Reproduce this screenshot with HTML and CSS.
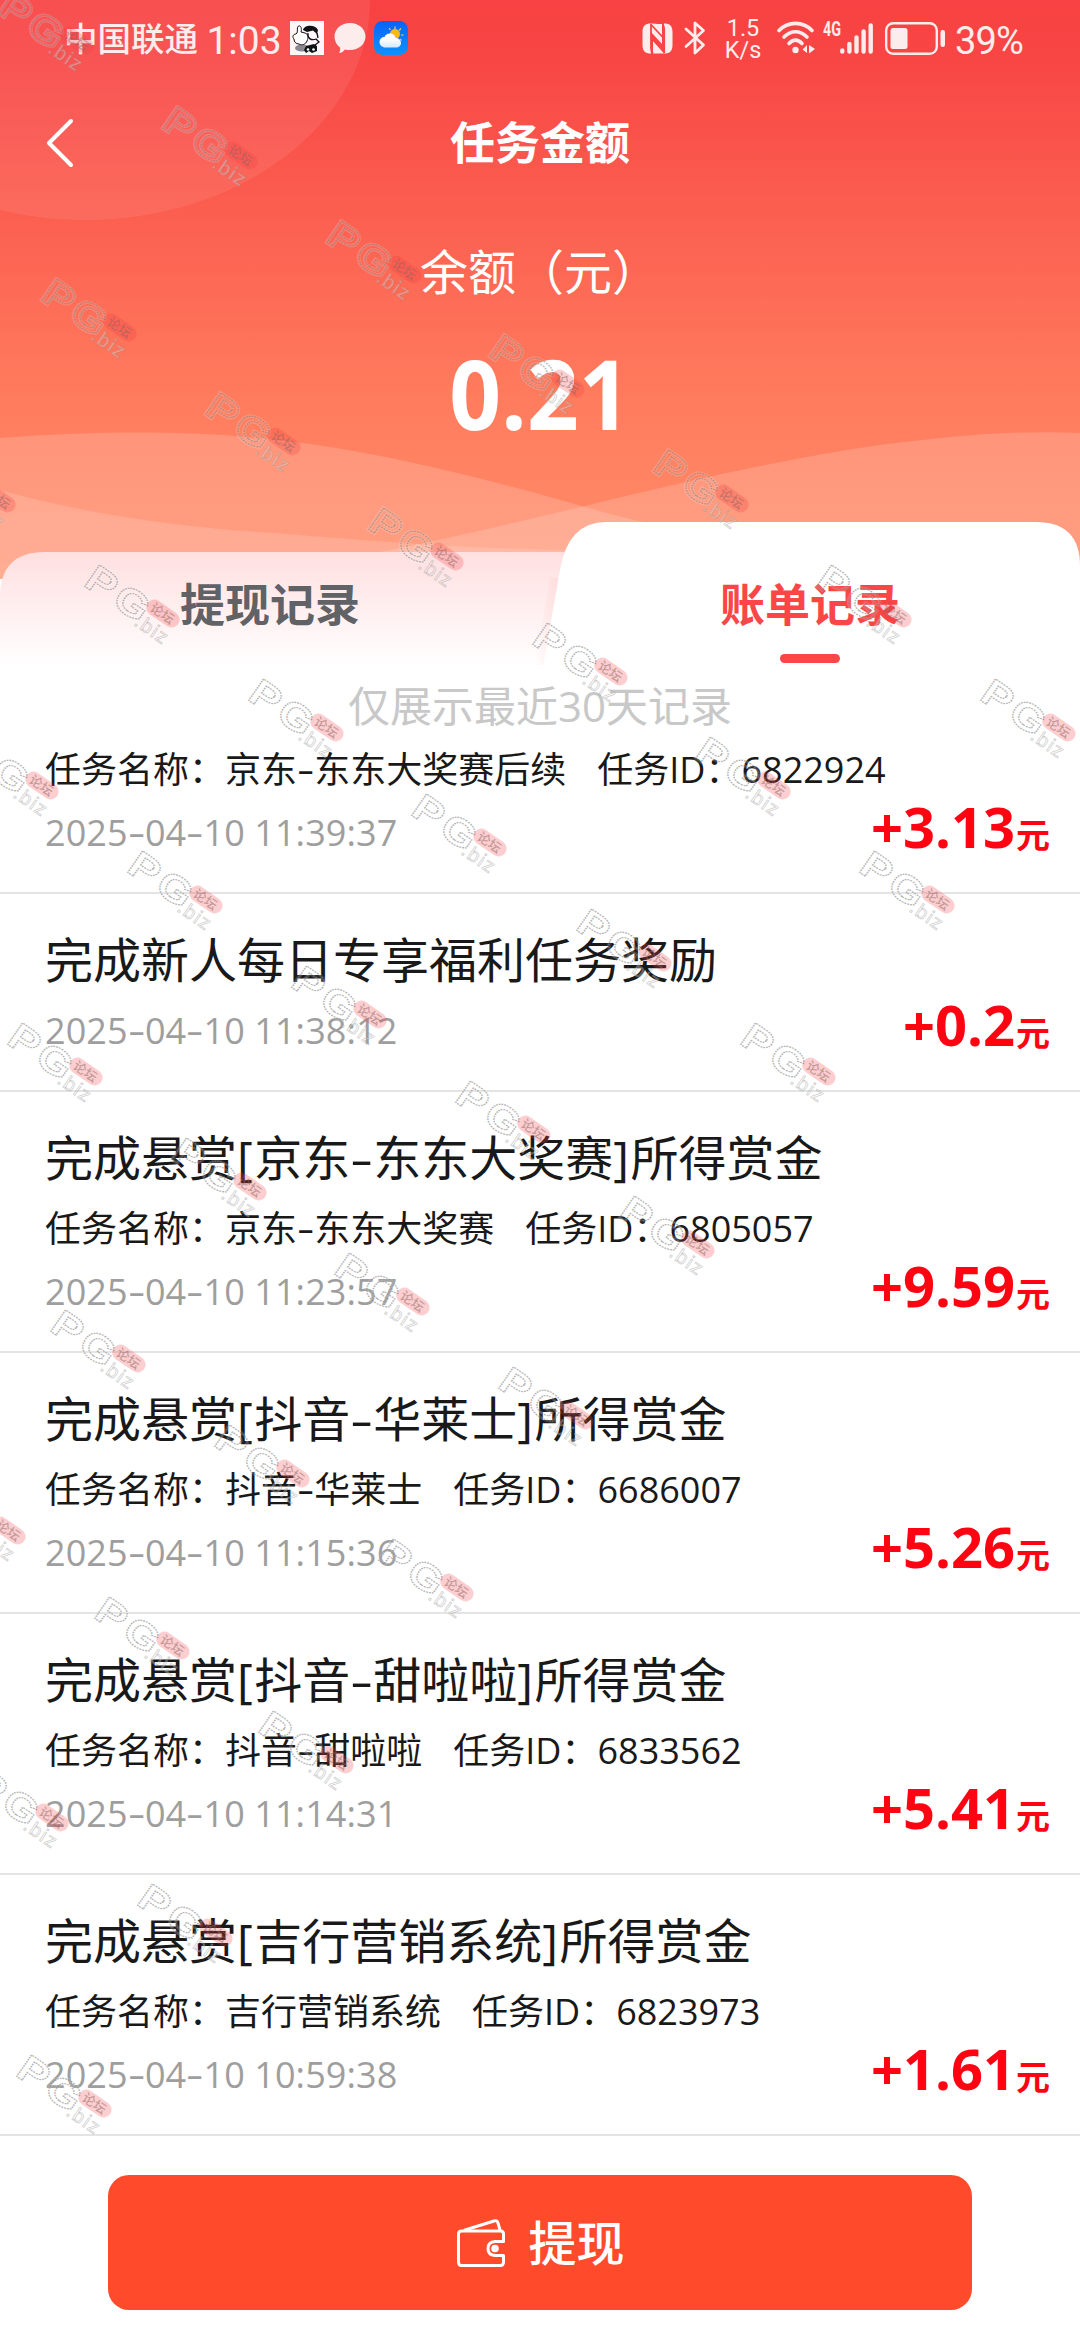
FILE: index.html
```html
<!DOCTYPE html>
<html lang="zh-CN">
<head>
<meta charset="utf-8">
<title>任务金额</title>
<link rel="stylesheet" href="styles.css">
</head>
<body>
<div class="page">
  <header class="hero">
    <svg class="hero-art" viewBox="0 0 1080 579" aria-hidden="true">
      <ellipse cx="85" cy="0" rx="285" ry="220" fill="#fff" fill-opacity=".08"/>
      <path d="M0 438C110 430 210 430 310 444C400 457 490 480 585 507C660 528 740 545 830 550V579H0Z" fill="#fff" fill-opacity=".17"/>
      <path d="M0 490C80 513 180 528 275 533C370 541 470 549 600 551V579H0Z" fill="#fff" fill-opacity=".15"/>
      <path d="M1080 433C1020 430 960 435 880 445C790 458 690 480 585 506C530 519 480 531 430 542L375 553V579H1080Z" fill="#fff" fill-opacity=".17"/>
    </svg>
    <div class="status">
      <div class="status-side">
        <span class="carrier">中国联通</span>
        <span class="clock">1:03</span>
        <svg class="ic-avatar" viewBox="0 0 34 34">
          <rect width="34" height="34" fill="#fdf6fb"/>
          <ellipse cx="12" cy="27" rx="7" ry="3.6" fill="#8d8890"/>
          <path d="M13 9C14 4 25 3 28 9L27 13L23 9.500L17 11Z" fill="#111"/>
          <path d="M6 13C3 13 2 16 4 18C4 21 6 23 9 23C12 25 16 23 17 20C19 16 18 13 15 12L11 11C12 8 11 4 8.500 5C6.500 6 8 10 7 12Z" fill="#fff" stroke="#111" stroke-width="1"/>
          <path d="M18 12C17 17 21 20 26 18L29 21L25 24M27 12L28 17" fill="none" stroke="#111" stroke-width="1.300"/>
          <path d="M16 25L24 23L27 25V30L22 32L19 30L16 32L14 29Z" fill="#111"/>
          <circle cx="18" cy="28.500" r="1.300" fill="#fff"/><circle cx="23.500" cy="28.500" r="1.300" fill="#fff"/>
        </svg>
        <svg class="ic-bubble" viewBox="0 0 32 32"><path d="M16 1C24.500 1 31.500 6.800 31.500 14.500S24.500 28 16 28C14 28 12.500 28 11 27.500C9 30 7.500 31 5 31C6 29.500 6.500 27.500 6 25.500C2.500 23 .5 19 .5 14.500C.5 6.800 7.500 1 16 1Z" fill="#fdecec"/></svg>
        <svg class="ic-weather" viewBox="0 0 34 34">
          <defs>
            <linearGradient id="sky" x2="0" y2="1"><stop stop-color="#0a62f8"/><stop offset="1" stop-color="#0b93fe"/></linearGradient>
            <linearGradient id="cloud" x2="0" y2="1"><stop offset=".4" stop-color="#fff"/><stop offset="1" stop-color="#d5e9ff"/></linearGradient>
          </defs>
          <rect width="34" height="34" rx="8.500" fill="url(#sky)"/>
          <circle cx="21" cy="13" r="5" fill="#fdb913"/>
          <path d="M21 8V5.500M25 9.500L27 7.500M27 14H29.500M16.500 9L15 7M26 18L27.500 19.500" stroke="#e9cf55" stroke-width="1.200"/>
          <path d="M11.500 26.500C8 26.500 5.500 24 5.500 21C5.500 18 8 16 10.500 16C11.500 13.500 14 12 16.500 12.500C19 12.500 21 14.500 21.500 17C24.500 17 27 19 27 22C27 24.500 25 26.500 22 26.500Z" fill="url(#cloud)"/>
        </svg>
      </div>
      <div class="status-side">
        <svg class="ic-nfc" viewBox="0 0 31 31">
          <path d="M9 .5C3 .5 .5 3 .5 9V22C.5 28 3 30.500 9 30.500V9L20 21V1C12 1 12 .5 9 .5Z" fill="#fdecec"/>
          <path d="M22 .5C28 .5 30.500 3 30.500 9V22C30.500 28 28 30.500 22 30.500L11 18V30.500H22V.5Z" fill="#fdecec"/>
          <path d="M9 1V25Q9 29 11 30.500M8.500 1L21.500 15M9.500 15L22 28M22.200 30V6Q22 3 20.500 1" fill="none" stroke="#f84645" stroke-width="1.800"/>
        </svg>
        <svg class="ic-bt" viewBox="0 0 22 34"><path d="M2 8L19.500 24L11 32V2L19.500 9.500L2 25.500" fill="none" stroke="#fdecec" stroke-width="2.800" stroke-linejoin="round" stroke-linecap="round"/></svg>
        <span class="speed"><span>1.5</span><span>K/s</span></span>
        <svg class="ic-wifi" viewBox="0 0 38 34">
          <g fill="none" stroke="#fdecec" stroke-width="3.600" stroke-linecap="round">
            <path d="M2 9.500C11 0 26 0 35 9.500"/><path d="M7 16C14 9 23 9 30 16"/><path d="M12 22.500C16 18 21 18 25 22.500"/>
          </g>
          <circle cx="18.500" cy="29" r="3.200" fill="#fdecec"/>
          <path d="M30 24V32L25.500 28.500ZM32 24V32.500L38 28Z" fill="#fdecec"/>
        </svg>
        <span class="net">4G</span>
        <svg class="ic-signal" viewBox="0 0 34 31"><path d="M2.300 27.500V28.500M9.400 21V28.500M16.500 14.500V28.500M23.600 8.500V28.500M30.700 2.500V28.500" stroke="#fdecec" stroke-width="4.400" stroke-linecap="round"/></svg>
        <svg class="ic-battery" viewBox="0 0 60 33">
          <rect x="1.200" y="1.200" width="50.600" height="30.600" rx="7" fill="none" stroke="#fdecec" stroke-width="2.400"/>
          <rect x="5.500" y="6" width="17" height="21" rx="2.500" fill="#fdecec"/>
          <rect x="55.500" y="8" width="4.500" height="17" rx="2.200" fill="#fdecec"/>
        </svg>
        <span class="pct">39%</span>
      </div>
    </div>
    <nav class="nav">
      <svg class="ic-back" viewBox="0 0 28 50"><path d="M25 3L3 25L25 47" fill="none" stroke="#fff" stroke-width="4" stroke-linecap="round" stroke-linejoin="round"/></svg>
      <h1 class="nav-title">任务金额</h1>
    </nav>
    <p class="label">余额（元）</p>
    <p class="balance">0.21</p>
  </header>

  <div class="tabs">
    <svg class="tabs-bg" viewBox="0 0 1080 144" aria-hidden="true">
      <defs><linearGradient id="tab" gradientUnits="userSpaceOnUse" x1="0" y1="30" x2="0" y2="144"><stop stop-color="#ffdfe0"/><stop offset="1" stop-color="#fff"/></linearGradient>
      <linearGradient id="edge" x2="1" y2="0"><stop stop-color="#ffd3d3" stop-opacity="0"/><stop offset="1" stop-color="#ffd3d3" stop-opacity=".55"/></linearGradient></defs>
      <path d="M0 57H60V144H0Z" fill="#fff"/>
      <path d="M0 75Q0 30 45 30H620V144H0Z" fill="url(#tab)"/>
      <path d="M535 144L550 56H562L546 144Z" fill="url(#edge)"/>
      <path d="M543 144L560 48Q568 0 606 0H1036Q1080 0 1080 44V144Z" fill="#fff"/>
    </svg>
    <button class="tab">提现记录</button>
    <button class="tab tab-on">账单记录</button>
  </div>
  <p class="notice">仅展示最近30天记录</p>

  <ul class="list">
    <li class="item item-cut">
      <p class="task">任务名称：京东<i>-</i>东东大奖赛后续<b></b>任务ID：6822924</p>
      <p class="time">2025<i>-</i>04<i>-</i>10 11:39:37</p>
      <p class="sum">+3.13<span>元</span></p>
    </li>
    <li class="item">
      <h2 class="title">完成新人每日专享福利任务奖励</h2>
      <p class="time">2025<i>-</i>04<i>-</i>10 11:38:12</p>
      <p class="sum">+0.2<span>元</span></p>
    </li>
    <li class="item">
      <h2 class="title">完成悬赏<u>[</u>京东<i>-</i>东东大奖赛<u>]</u>所得赏金</h2>
      <p class="task">任务名称：京东<i>-</i>东东大奖赛<b></b>任务ID：6805057</p>
      <p class="time">2025<i>-</i>04<i>-</i>10 11:23:57</p>
      <p class="sum">+9.59<span>元</span></p>
    </li>
    <li class="item">
      <h2 class="title">完成悬赏<u>[</u>抖音<i>-</i>华莱士<u>]</u>所得赏金</h2>
      <p class="task">任务名称：抖音<i>-</i>华莱士<b></b>任务ID：6686007</p>
      <p class="time">2025<i>-</i>04<i>-</i>10 11:15:36</p>
      <p class="sum">+5.26<span>元</span></p>
    </li>
    <li class="item">
      <h2 class="title">完成悬赏<u>[</u>抖音<i>-</i>甜啦啦<u>]</u>所得赏金</h2>
      <p class="task">任务名称：抖音<i>-</i>甜啦啦<b></b>任务ID：6833562</p>
      <p class="time">2025<i>-</i>04<i>-</i>10 11:14:31</p>
      <p class="sum">+5.41<span>元</span></p>
    </li>
    <li class="item">
      <h2 class="title">完成悬赏<u>[</u>吉行营销系统<u>]</u>所得赏金</h2>
      <p class="task">任务名称：吉行营销系统<b></b>任务ID：6823973</p>
      <p class="time">2025<i>-</i>04<i>-</i>10 10:59:38</p>
      <p class="sum">+1.61<span>元</span></p>
    </li>
  </ul>

  <button class="withdraw">
    <svg class="ic-wallet" viewBox="0 0 48 48" fill="none" stroke="#fff" stroke-width="3" stroke-linejoin="round" stroke-linecap="round">
      <path d="M8 11L37 2Q40 1 41 4L43 11"/>
      <path d="M46.500 22.500V15Q46.500 12 43.500 12H4.500Q1.500 12 1.500 15V43Q1.500 46.500 4.500 46.500H43.500Q46.500 46.500 46.500 43V36.500H38Q31 36 31 29.500Q31 23 38 22.500Z"/>
      <circle cx="38" cy="29.500" r="3.800" fill="#fff" stroke="none"/>
    </svg>
    <span>提现</span>
  </button>

  <svg class="marks" viewBox="0 0 1080 2340" aria-hidden="true">
    <defs>
      <g id="mark" transform="translate(16 0) rotate(34.5)">
        <g transform="scale(1.18 1)">
          <text class="mark-glow" x="-2" y="28">P</text><text class="mark-glow" x="27" y="28">G</text>
          <text class="mark-line" x="-2" y="28">P</text><text class="mark-line" x="27" y="28">G</text>
        </g>
        <rect x="62" y="-2" width="37" height="16" rx="8" fill="#f33a3f" fill-opacity=".25"/>
        <text class="mark-cn" x="67" y="11">论坛</text>
        <text class="mark-biz" x="62" y="32">.biz</text>
      </g>
    </defs>
    <use href="#mark" x="-2" y="-10"/><use href="#mark" x="162" y="105"/><use href="#mark" x="326" y="219"/><use href="#mark" x="489" y="333"/><use href="#mark" x="653" y="448"/><use href="#mark" x="816" y="563"/><use href="#mark" x="980" y="677"/>
    <use href="#mark" x="41" y="277"/><use href="#mark" x="205" y="391"/><use href="#mark" x="368" y="506"/><use href="#mark" x="532" y="621"/><use href="#mark" x="695" y="735"/><use href="#mark" x="859" y="849"/>
    <use href="#mark" x="-80" y="448"/><use href="#mark" x="84" y="563"/><use href="#mark" x="248" y="677"/><use href="#mark" x="411" y="792"/><use href="#mark" x="576" y="907"/><use href="#mark" x="740" y="1021"/>
    <use href="#mark" x="-37" y="735"/><use href="#mark" x="127" y="849"/><use href="#mark" x="291" y="964"/><use href="#mark" x="455" y="1079"/><use href="#mark" x="619" y="1194"/>
    <use href="#mark" x="7" y="1021"/><use href="#mark" x="171" y="1136"/><use href="#mark" x="334" y="1251"/><use href="#mark" x="498" y="1365"/>
    <use href="#mark" x="50" y="1308"/><use href="#mark" x="214" y="1423"/><use href="#mark" x="378" y="1537"/>
    <use href="#mark" x="-70" y="1480"/><use href="#mark" x="94" y="1595"/><use href="#mark" x="258" y="1709"/>
    <use href="#mark" x="-27" y="1767"/><use href="#mark" x="137" y="1882"/>
    <use href="#mark" x="16" y="2053"/>
  </svg>
</div>
</body>
</html>
```
FILE: styles.css
```css
* { box-sizing: border-box; margin: 0; padding: 0; }
body {
  width: 1080px;
  background: #fff;
  font-family: "Open Sans", "Noto Sans CJK SC", sans-serif;
  color: #191919;
}
button { border: 0; background: none; font-family: inherit; }
svg { display: block; flex: none; }
.page {
  position: relative;
  display: flex;
  flex-direction: column;
  width: 1080px;
  height: 2340px;
  overflow: hidden;
}

/* header */
.hero {
  position: relative;
  height: 579px;
  flex: none;
  background: linear-gradient(#f84142 0, #f84645 60px, #fc6352 240px, #ff7c5e 400px, #ff8865 520px, #ff8c68 579px);
  color: #fff;
  text-align: center;
}
.hero-art { position: absolute; left: 0; top: 0; width: 1080px; height: 579px; }
.status {
  position: relative;
  display: flex;
  justify-content: space-between;
  height: 76px;
  padding: 0 57px 0 64px;
  color: #fdecec;
  font-family: Roboto, "Noto Sans CJK SC", sans-serif;
}
.status-side { display: flex; align-items: center; height: 76px; }
.carrier { font-size: 33.5px; line-height: 40px; font-weight: 500; margin: 3px 8px 0 0; }
.clock { font-size: 39px; line-height: 44px; width: 76px; margin: 5px 8px 0 0; }
.ic-avatar { width: 34px; height: 34px; margin-right: 10px; }
.ic-bubble { width: 32px; height: 32px; margin-right: 8px; }
.ic-weather { width: 34px; height: 34px; }
.ic-nfc { width: 31px; height: 31px; margin-right: 11px; }
.ic-bt { width: 22px; height: 34px; margin-right: 19px; }
.speed {
  display: flex;
  flex-direction: column;
  align-items: center;
  width: 36px;
  font-size: 23.5px;
  line-height: 22px;
  font-weight: 400;
  margin: 1px 16px 0 0;
}
.ic-wifi { width: 38px; height: 34px; margin-right: 8px; }
.net { font: 700 20px/20px Roboto, sans-serif; width: 17px; margin-top: -18px; transform: scaleX(.72); transform-origin: left; }
.ic-signal { width: 34px; height: 31px; margin: 0 11px 0 0; }
.ic-battery { width: 60px; height: 33px; margin: 1px 10px 0 0; }
.pct { font-size: 38px; line-height: 44px; margin-top: 5px; letter-spacing: -.9px; width: 68px; white-space: nowrap; }
.nav {
  position: relative;
  display: flex;
  align-items: center;
  justify-content: center;
  height: 134px;
}
.ic-back { position: absolute; left: 46px; top: 42px; width: 28px; height: 50px; }
.nav-title { font-size: 45px; line-height: 60px; font-weight: 700; }
.label { position: relative; margin-top: 30px; font-size: 48px; line-height: 64px; white-space: nowrap; }
.balance { position: relative; margin-top: 24px; font-size: 96px; line-height: 130px; font-weight: 700; transform: scaleX(.945); }

/* tabs */
.tabs {
  position: relative;
  display: flex;
  height: 144px;
  flex: none;
  margin-top: -57px;
}
.tabs-bg { position: absolute; inset: 0; width: 1080px; height: 144px; }
.tab {
  position: relative;
  display: flex;
  flex: 1;
  flex-direction: column;
  align-items: center;
  padding-top: 53px;
  font-size: 45px;
  line-height: 60px;
  font-weight: 600;
  color: #606266;
}
.tab-on { color: #fa4646; }
.tab-on::after {
  content: "";
  width: 60px;
  height: 9px;
  margin-top: 19px;
  border-radius: 5px;
  background: #fa4646;
}
.notice {
  flex: none;
  height: 74px;
  padding-top: 10px;
  font-size: 42px;
  line-height: 60px;
  text-align: center;
  color: #c8c8c8;
}

/* records */
.list { flex: none; list-style: none; }
.item {
  position: relative;
  display: flex;
  flex-direction: column;
  gap: 13px;
  padding: 36px 30px 34px 45px;
  border-bottom: 2px solid #e4e4e4;
  margin-bottom: -1px;
}
.item-cut { padding-top: 5px; }
.title { font-size: 48px; line-height: 62px; padding-bottom: 2px; font-weight: 400; white-space: nowrap; }
.title u { text-decoration: none; margin-right: 1.5px; }
.task { font-size: 36px; line-height: 50px; white-space: nowrap; }
.task b { display: inline-block; width: 31px; }
.time { font-size: 36px; line-height: 50px; color: #9e9e9e; letter-spacing: .08px; white-space: nowrap; }
.item i {
  display: inline-block;
  width: .48em;
  font-style: normal;
  text-align: center;
  transform: scaleX(1.5);
}
.sum {
  position: absolute;
  right: 30px;
  bottom: 22px;
  font-size: 56px;
  line-height: 70px;
  font-weight: 700;
  color: #fe0412;
  white-space: nowrap;
}
.sum span { font-size: 34px; margin-left: 1px; }

/* withdraw button */
.withdraw {
  display: flex;
  flex: none;
  align-items: center;
  justify-content: center;
  gap: 23px;
  width: 864px;
  height: 135px;
  margin: 40px auto 0;
  padding-left: 2px;
  border-radius: 21px;
  background: #ff4b2b;
  color: #fff;
  font-size: 48px;
  line-height: 64px;
  font-weight: 500;
}
.ic-wallet { width: 48px; height: 48px; }

/* watermark layer */
.marks { position: absolute; left: 0; top: 0; width: 1080px; height: 2340px; pointer-events: none; }
.mark-glow, .mark-line { font: 700 38px "Liberation Sans", sans-serif; fill: none; }
.mark-glow { stroke: #fff; stroke-opacity: .16; stroke-width: 3.5px; }
.mark-line { stroke: #828282; stroke-opacity: .6; stroke-width: 1.3px; stroke-dasharray: 1.6 .9; }
.mark-cn { font: 500 13px "Noto Sans CJK SC", sans-serif; fill: #8c6464; fill-opacity: .5; }
.mark-biz { font: 400 20px "Liberation Sans", sans-serif; fill: #fff; fill-opacity: .3; stroke: #8c8c8c; stroke-opacity: .42; stroke-width: .8px; letter-spacing: 1.5px; }
```
